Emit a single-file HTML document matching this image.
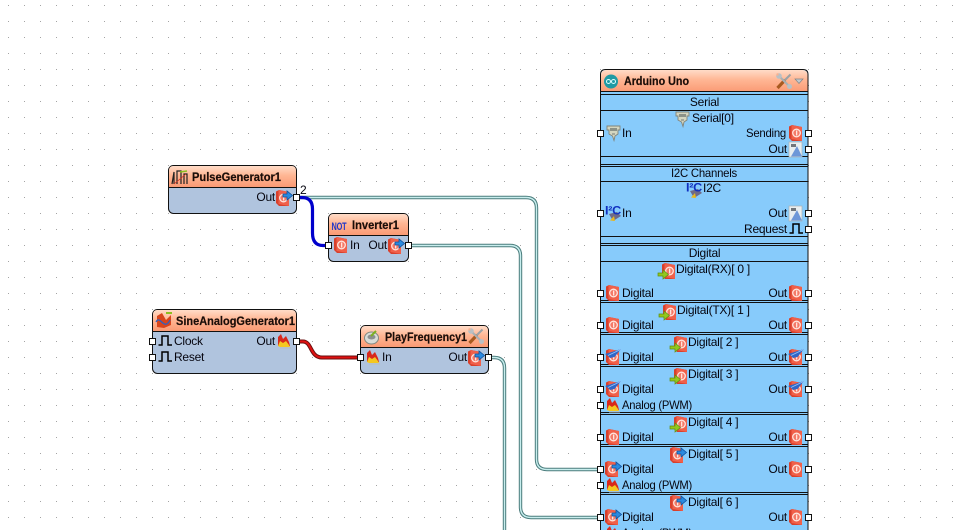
<!DOCTYPE html>
<html><head><meta charset="utf-8"><style>
html,body{margin:0;padding:0;background:#fff;width:964px;height:530px;overflow:hidden}
svg{display:block}
text{font-family:"Liberation Sans",sans-serif;font-size:12px;letter-spacing:-.25px;fill:#05050f}
.t{font-weight:bold;font-size:11.5px;letter-spacing:0;fill:#1a0d08;stroke:#1a0d08;stroke-width:.2}
.m{text-anchor:middle}
.e{text-anchor:end}
</style></head><body>
<svg width="964" height="530" viewBox="0 0 964 530" xmlns="http://www.w3.org/2000/svg">
<defs>
<pattern id="dots" x="8" y="5" width="16" height="16" patternUnits="userSpaceOnUse"><rect width="1" height="1" fill="#a4a4a4"/></pattern>
<linearGradient id="tg" x1="0" y1="0" x2="0" y2="1"><stop offset="0" stop-color="#ffdcc8"/><stop offset=".45" stop-color="#ffb694"/><stop offset="1" stop-color="#fa9a74"/></linearGradient>
<g id="dig"><path d="M0 1.500L3 0 13 2V16L3 16 0 13Z" fill="#d8402c"/><path d="M2.500 0L13 2V16L2.500 14Z" fill="#f0604a"/><circle cx="7.500" cy="8" r="3.800" fill="#f47a68" stroke="#ffe4dc" stroke-width="1.300"/><rect x="7" y="5.500" width="1.300" height="5" fill="#ffe4dc"/></g>
<g id="ga"><path d="M0 3H5V0L10.500 4.500 5 9V6H0Z" fill="#92c81e" stroke="#5f8f10" stroke-width=".7"/></g>
<g id="ba"><path d="M0 3H4V0L9.500 4.500 4 9V6H0Z" fill="#2a8ae0" stroke="#0f4f9a" stroke-width=".8"/></g>
<g id="dg"><use href="#dig" x="4"/><use href="#ga" y="7"/></g>
<g id="db"><use href="#dig"/><use href="#ba" x="7" y="1"/></g>
<g id="dq"><use href="#dig" x="1" y="0"/><path d="M0 5L16 0 9.500 8 5 9 3 7Z" fill="#2f66c8"/><path d="M3 6.500L15.500 .5" stroke="#9cc2f4" fill="none" stroke-width=".8"/></g>
<g id="fl"><path d="M1 12V3L4 0 6 5 9 2 12 8 13 12Z" fill="#d8281c"/><path d="M1 12L3 7 6 9 9 7 12 11 13 13H3Z" fill="#f4c820"/><path d="M3 14H14" stroke="#b8bcc0"/></g>
<g id="sr"><path d="M1 1H14V5H12V9L9 11 8 15.500 6.500 11 3 9V5H1Z" fill="#d4d6c0" stroke="#80847a" stroke-width=".9"/><rect x="4" y="3" width="7" height="3" fill="#8c9288"/><rect x="6" y="8" width="3" height="2" fill="#a4a89c"/></g>
<g id="pl"><path d="M0 10.500H3.500V1.500H9.500V10.500H13.500" fill="none" stroke="#000" stroke-width="1.500"/></g>
<g id="an"><rect x="1" y="0" width="13" height="15" fill="#e8eef0" stroke="#a8b0b4" stroke-width=".7"/><path d="M3 14.500L9 4 14 14.500Z" fill="#6d97d8"/><rect x="3" y="2" width="5" height="3" fill="#70767c"/></g>
<g id="i2"><path d="M4 9L12 7 16 11 8 16Z" fill="#6e6a88"/><path d="M5 15.500L9 11 10 16Z" fill="#e8b820"/><text x="0" y="9.500" textLength="16" lengthAdjust="spacingAndGlyphs" style="font-size:12px;font-weight:bold;fill:#1030c0">I²C</text></g>
<g id="wr"><path d="M1.500 15L9 7" stroke="#a85a20" stroke-width="3.200"/><path d="M9 7L14.500 1.500" stroke="#9aa2a6" stroke-width="2"/><path d="M3 3L13 13" stroke="#a8b0b4" stroke-width="2.200"/><circle cx="3" cy="3" r="2.800" fill="#b8c0c4"/><circle cx="13.500" cy="13.500" r="2.500" fill="#b8c0c4"/><circle cx="1.500" cy="1.500" r="1.200" fill="#f8b090"/></g>
</defs>

<rect width="964" height="530" fill="#fff"/>
<rect width="964" height="530" fill="url(#dots)"/>

<!-- wires -->
<g fill="none">
<path d="M297 197.500H526Q536.500 197.500 536.500 208V459Q536.500 469.500 547 469.500H600" stroke="#4a7c7c" stroke-width="3.400"/>
<path d="M297 197.500H526Q536.500 197.500 536.500 208V459Q536.500 469.500 547 469.500H600" stroke="#c8eeee" stroke-width="1.400"/>
<path d="M408 245.500H510Q520.500 245.500 520.500 256V507Q520.500 517.500 531 517.500H600" stroke="#4a7c7c" stroke-width="3.400"/>
<path d="M408 245.500H510Q520.500 245.500 520.500 256V507Q520.500 517.500 531 517.500H600" stroke="#c8eeee" stroke-width="1.400"/>
<path d="M489 357.500H494Q504.500 357.500 504.500 368V530" stroke="#4a7c7c" stroke-width="3.400"/>
<path d="M489 357.500H494Q504.500 357.500 504.500 368V530" stroke="#c8eeee" stroke-width="1.400"/>
<path d="M297 197.500H302Q312.500 197.500 312.500 209V233Q312.500 245.500 323 245.500H329" stroke="#0000cc" stroke-width="3.200"/>
<path d="M297 341.500H303C312 341.500 310 357.500 322 357.500H361" stroke="#6a1010" stroke-width="4"/>
<path d="M297 341.500H303C312 341.500 310 357.500 322 357.500H361" stroke="#e01010" stroke-width="2"/>
</g>

<!-- PulseGenerator -->
<rect x="168.500" y="165.500" width="128" height="48" rx="5" fill="#b0c4de" stroke="#111"/>
<path d="M169 187V170.500Q169 166 173.500 166H291.500Q296 166 296 170.500V187Z" fill="url(#tg)"/>
<path d="M168.500 187.500H296.500" stroke="#111"/>
<path d="M172 184L174 172V184M177 184V171H181V184M184 184V174H187V184" fill="none" stroke="#222" stroke-width="1.200"/>
<path d="M180 172L187 171" stroke="#8cc020" stroke-width="1.500"/>
<path d="M174 184L186 174" stroke="#d83020" stroke-width=".8"/>
<text class="t" x="192" y="181" textLength="89" lengthAdjust="spacingAndGlyphs">PulseGenerator1</text>
<text class="e" x="275" y="201">Out</text>
<use href="#db" x="276" y="190"/>
<text x="300" y="194">2</text>

<!-- Inverter -->
<rect x="328.500" y="213.500" width="80" height="48" rx="5" fill="#b0c4de" stroke="#111"/>
<path d="M329 235V218.500Q329 214 333.500 214H403.500Q408 214 408 218.500V235Z" fill="url(#tg)"/>
<path d="M328.500 235.500H408.500" stroke="#111"/>
<text x="331.500" y="230" style="font-size:11px;font-weight:bold;fill:#2038c8" textLength="15" lengthAdjust="spacingAndGlyphs">NOT</text>
<text class="t" x="352" y="229" textLength="47" lengthAdjust="spacingAndGlyphs">Inverter1</text>
<use href="#dig" x="334" y="237"/>
<text x="350" y="249">In</text>
<text class="e" x="387" y="249">Out</text>
<use href="#db" x="388" y="238"/>

<!-- SineAnalogGenerator -->
<rect x="152.500" y="309.500" width="144" height="64" rx="5" fill="#b0c4de" stroke="#111"/>
<path d="M153 331V314.500Q153 310 157.500 310H291.500Q296 310 296 314.500V331Z" fill="url(#tg)"/>
<path d="M152.500 331.500H296.500" stroke="#111"/>
<path d="M157 327V316L162 313 166 320 171 315V325L164 328Z" fill="#d8451c"/>
<path d="M156 322C160 314 164 332 170 320" fill="none" stroke="#3060c0" stroke-width="1.300"/>
<path d="M166 313H172" stroke="#8cc020" stroke-width="2"/>
<text class="t" x="176" y="325" textLength="119" lengthAdjust="spacingAndGlyphs">SineAnalogGenerator1</text>
<use href="#pl" x="158.500" y="334.500"/>
<text x="174" y="345">Clock</text>
<use href="#pl" x="158.500" y="350.500"/>
<text x="174" y="361">Reset</text>
<text class="e" x="275" y="345">Out</text>
<use href="#fl" x="277" y="334"/>

<!-- PlayFrequency -->
<rect x="360.500" y="325.500" width="128" height="48" rx="5" fill="#b0c4de" stroke="#111"/>
<path d="M361 347V330.500Q361 326 365.500 326H483.500Q488 326 488 330.500V347Z" fill="url(#tg)"/>
<path d="M360.500 347.500H488.500" stroke="#111"/>
<ellipse cx="371.500" cy="338" rx="7" ry="6" fill="#d8dcd8" stroke="#808880"/>
<ellipse cx="371.500" cy="337" rx="4" ry="2.500" fill="#8a9090"/>
<path d="M371 336L376 331" stroke="#7cb020" stroke-width="2"/>
<text class="t" x="385" y="341" textLength="82" lengthAdjust="spacingAndGlyphs">PlayFrequency1</text>
<use href="#wr" x="468" y="328"/>
<use href="#fl" x="366" y="350"/>
<text x="382" y="361">In</text>
<text class="e" x="467" y="361">Out</text>
<use href="#db" x="468" y="350"/>

<!-- Arduino -->
<path d="M600.500 540V74.500Q600.500 69.500 605.500 69.500H803Q808 69.500 808 74.500V540" fill="#87cbfb" stroke="#111"/>
<path d="M601 92V75Q601 70 606 70H802.500Q807.500 70 807.500 75V92Z" fill="url(#tg)"/>
<g stroke="#111" fill="none">
<path d="M600.500 91.500H808M600.500 94.500H808M600.500 110.500H808M600.500 156.500H808M600.500 164.500H808M600.500 166.500H808M600.500 181.500H808M600.500 236.500H808M600.500 243.500H808M600.500 245.500H808M600.500 261.500H808M600.500 300.500H808M600.500 302.500H808M600.500 332.500H808M600.500 334.500H808M600.500 364.500H808M600.500 366.500H808M600.500 412.500H808M600.500 414.500H808M600.500 444.500H808M600.500 446.500H808M600.500 492.500H808M600.500 494.500H808"/>
</g>
<circle cx="611" cy="81.500" r="7" fill="#1f9aa4"/>
<circle cx="608.500" cy="81.500" r="2" fill="none" stroke="#dff" stroke-width="1"/>
<circle cx="613.500" cy="81.500" r="2" fill="none" stroke="#dff" stroke-width="1"/>
<text class="t" x="624" y="85" textLength="65" lengthAdjust="spacingAndGlyphs">Arduino Uno</text>
<use href="#wr" x="776" y="73"/>
<path d="M795 79H803L799 83.500Z" fill="#c2c8cc" stroke="#808488" stroke-width=".7"/>

<text class="m" x="704.500" y="106">Serial</text>
<use href="#sr" x="675" y="111"/>
<text x="692" y="122">Serial[0]</text>
<use href="#sr" x="606" y="125"/>
<text x="622" y="137">In</text>
<text x="746" y="137" textLength="40" lengthAdjust="spacingAndGlyphs">Sending</text>
<use href="#dig" x="789" y="125"/>
<text class="e" x="787" y="153">Out</text>
<use href="#an" x="788" y="142"/>

<text x="671" y="177" textLength="66" lengthAdjust="spacingAndGlyphs">I2C Channels</text>
<use href="#i2" x="686" y="182"/>
<text x="703" y="192">I2C</text>
<use href="#i2" x="605" y="205"/>
<text x="622" y="217">In</text>
<text class="e" x="787" y="217">Out</text>
<use href="#an" x="788" y="206"/>
<text class="e" x="787" y="233">Request</text>
<use href="#pl" x="789.500" y="222.500"/>

<text class="m" x="704.500" y="257">Digital</text>
<use href="#dg" x="658" y="263"/>
<text x="676" y="273">Digital(RX)[ 0 ]</text>
<use href="#dig" x="606" y="285"/>
<text x="622" y="297">Digital</text>
<text class="e" x="787" y="297">Out</text>
<use href="#dig" x="789" y="285"/>

<use href="#dg" x="659" y="304"/>
<text x="677" y="314">Digital(TX)[ 1 ]</text>
<use href="#dig" x="606" y="317"/>
<text x="622" y="329">Digital</text>
<text class="e" x="787" y="329">Out</text>
<use href="#dig" x="789" y="317"/>

<use href="#dg" x="670" y="336"/>
<text x="688" y="346">Digital[ 2 ]</text>
<use href="#dq" x="605" y="349"/>
<text x="622" y="361">Digital</text>
<text class="e" x="787" y="361">Out</text>
<use href="#dq" x="788" y="349"/>

<use href="#dg" x="670" y="368"/>
<text x="688" y="378">Digital[ 3 ]</text>
<use href="#dq" x="605" y="381"/>
<text x="622" y="393">Digital</text>
<text class="e" x="787" y="393">Out</text>
<use href="#dq" x="788" y="381"/>
<use href="#fl" x="606" y="398"/>
<text x="622" y="409" textLength="70" lengthAdjust="spacingAndGlyphs">Analog (PWM)</text>

<use href="#dg" x="670" y="416"/>
<text x="688" y="426">Digital[ 4 ]</text>
<use href="#dig" x="606" y="429"/>
<text x="622" y="441">Digital</text>
<text class="e" x="787" y="441">Out</text>
<use href="#dig" x="789" y="429"/>

<use href="#db" x="670" y="447"/>
<text x="688" y="458">Digital[ 5 ]</text>
<use href="#db" x="605" y="461"/>
<text x="622" y="473">Digital</text>
<text class="e" x="787" y="473">Out</text>
<use href="#dig" x="789" y="461"/>
<use href="#fl" x="606" y="478"/>
<text x="622" y="489" textLength="70" lengthAdjust="spacingAndGlyphs">Analog (PWM)</text>

<use href="#db" x="670" y="495"/>
<text x="688" y="506">Digital[ 6 ]</text>
<use href="#db" x="605" y="509"/>
<text x="622" y="521">Digital</text>
<text class="e" x="787" y="521">Out</text>
<use href="#dig" x="789" y="509"/>
<use href="#fl" x="606" y="526"/>
<text x="622" y="537" textLength="70" lengthAdjust="spacingAndGlyphs">Analog (PWM)</text>

<!-- ports -->
<g fill="#fff" stroke="#111">
<rect x="597.500" y="130.500" width="6" height="6"/><rect x="805.500" y="130.500" width="6" height="6"/><rect x="805.500" y="146.500" width="6" height="6"/>
<rect x="597.500" y="210.500" width="6" height="6"/><rect x="805.500" y="210.500" width="6" height="6"/><rect x="805.500" y="226.500" width="6" height="6"/>
<rect x="597.500" y="290.500" width="6" height="6"/><rect x="805.500" y="290.500" width="6" height="6"/>
<rect x="597.500" y="322.500" width="6" height="6"/><rect x="805.500" y="322.500" width="6" height="6"/>
<rect x="597.500" y="354.500" width="6" height="6"/><rect x="805.500" y="354.500" width="6" height="6"/>
<rect x="597.500" y="386.500" width="6" height="6"/><rect x="805.500" y="386.500" width="6" height="6"/><rect x="597.500" y="402.500" width="6" height="6"/>
<rect x="597.500" y="434.500" width="6" height="6"/><rect x="805.500" y="434.500" width="6" height="6"/>
<rect x="597.500" y="466.500" width="6" height="6"/><rect x="805.500" y="466.500" width="6" height="6"/><rect x="597.500" y="482.500" width="6" height="6"/>
<rect x="597.500" y="514.500" width="6" height="6"/><rect x="805.500" y="514.500" width="6" height="6"/>
<rect x="293.500" y="194.500" width="6" height="6"/>
<rect x="325.500" y="242.500" width="6" height="6"/><rect x="405.500" y="242.500" width="6" height="6"/>
<rect x="149.500" y="338.500" width="6" height="6"/><rect x="149.500" y="354.500" width="6" height="6"/><rect x="293.500" y="338.500" width="6" height="6"/>
<rect x="357.500" y="354.500" width="6" height="6"/><rect x="485.500" y="354.500" width="6" height="6"/>
</g>
</svg>
</body></html>
